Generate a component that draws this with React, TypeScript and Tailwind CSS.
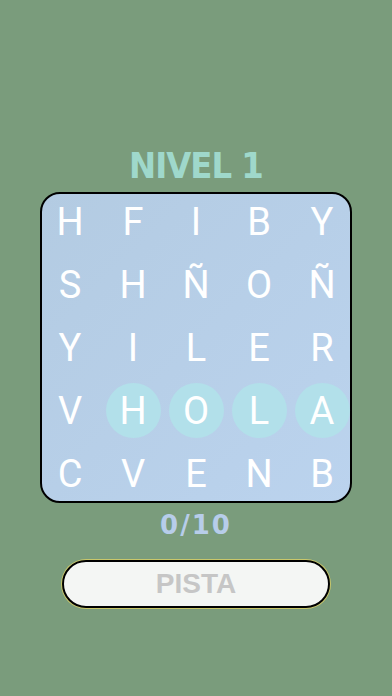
import React from 'react';

const grid: string[][] = [
  ['H', 'F', 'I', 'B', 'Y'],
  ['S', 'H', 'Ñ', 'O', 'Ñ'],
  ['Y', 'I', 'L', 'E', 'R'],
  ['V', 'H', 'O', 'L', 'A'],
  ['C', 'V', 'E', 'N', 'B'],
];

// cells already found (row-col)
const found = new Set(['3-1', '3-2', '3-3', '3-4']);

export default function App() {
  return (
    <div className="w-[392px] h-[696px] bg-[#7a9c7c] flex flex-col items-center">
      {/* Title */}
      <h1
        className="mt-[146px] h-[40px] text-[36px] leading-[40px] font-black tracking-[-1px] text-[#9fd8cb]"
        style={{ fontFamily: '"DejaVu Sans Condensed", "DejaVu Sans", sans-serif' }}
      >
        NIVEL 1
      </h1>

      {/* Board */}
      <div className="mt-[6px] w-[312px] h-[311px] rounded-[20px] border-2 border-black bg-gradient-to-br from-[#b3cbe2] to-[#bbd3ee] grid grid-cols-[repeat(5,63px)] grid-rows-[repeat(5,63px)] justify-center content-center">
        {grid.map((row, r) =>
          row.map((ch, c) => (
            <div key={`${r}-${c}`} className="flex items-center justify-center">
              <div
                className={`w-[55px] h-[55px] rounded-full flex items-center justify-center ${
                  found.has(`${r}-${c}`) ? 'bg-[#b2e0ea]' : ''
                }`}
              >
                <span
                  className="text-white text-[38px] leading-none font-normal"
                  style={{ fontFamily: 'Roboto, sans-serif' }}
                >
                  {ch}
                </span>
              </div>
            </div>
          ))
        )}
      </div>

      {/* Progress */}
      <div
        className="mt-[8px] text-[26px] leading-[28px] font-black tracking-[2px] text-[#b7cdea]"
        style={{ fontFamily: '"DejaVu Sans", sans-serif' }}
      >
        0/10
      </div>

      {/* Hint button */}
      <button className="mt-[21px] w-[268px] h-[48px] rounded-full border-2 border-black bg-[#f4f6f4] shadow-[0_0_0_1px_#c9c76a] flex items-center justify-center">
        <span
          className="text-[28px] font-bold text-[#c6c6c6]"
          style={{ fontFamily: '"Liberation Sans", Arial, sans-serif' }}
        >
          PISTA
        </span>
      </button>
    </div>
  );
}
